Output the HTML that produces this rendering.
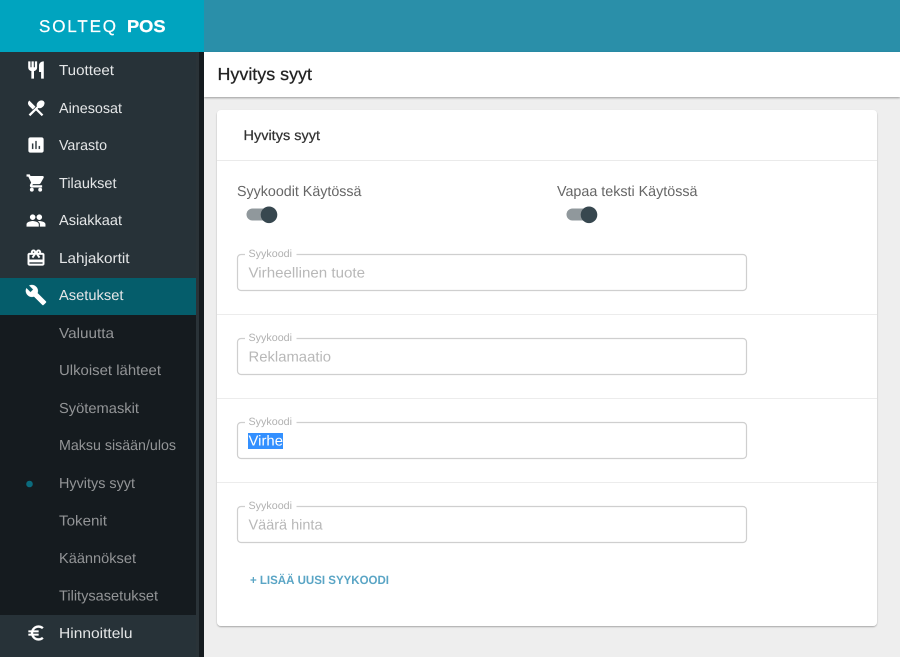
<!DOCTYPE html>
<html><head><meta charset="utf-8"><title>Hyvitys syyt</title>
<style>
html,body{margin:0;padding:0;width:900px;height:657px;overflow:hidden;background:#eee}
svg{display:block;font-family:"Liberation Sans",sans-serif;text-rendering:geometricPrecision}
.n{font-size:14.5px;fill:#e4e6e7}
.s{font-size:14.5px;fill:#939597}
.l{font-size:10.5px;fill:#b0b0b0}
.v{font-size:14.5px;fill:#b8b8b8}
</style></head><body>
<svg width="900" height="657" viewBox="0 0 900 657" xmlns="http://www.w3.org/2000/svg">
<defs>
<filter id="sh" x="-5%" y="-5%" width="110%" height="110%"><feDropShadow dx="0" dy="1" stdDeviation=".7" flood-color="#000" flood-opacity=".3"/></filter>
<filter id="sh2" x="-5%" y="-20%" width="110%" height="150%"><feDropShadow dx="0" dy="1" stdDeviation="1" flood-color="#000" flood-opacity=".35"/></filter>
</defs>
<rect width="900" height="657" fill="#eeeeee"/>
<rect x="204" y="0" width="696" height="52" fill="#2a8fa9"/>
<rect x="204" y="52" width="696" height="45" fill="#fff" filter="url(#sh2)"/>
<rect x="0" y="52" width="196" height="605" fill="#273238"/>
<rect x="196" y="52" width="3" height="605" fill="#2a3338"/>
<rect x="199" y="52" width="5" height="605" fill="#151b1f"/>
<rect x="0" y="0" width="204" height="52" fill="#00a4bf"/>
<rect x="0" y="278" width="196" height="37" fill="#055d6b"/>
<rect x="0" y="315" width="196" height="300" fill="#151b1f"/>
<text x="39" y="32" font-size="17" fill="#fff" stroke="#fff" stroke-width=".25" textLength="77" lengthAdjust="spacing">SOLTEQ</text>
<text x="127" y="32" font-size="17" font-weight="700" fill="#fff" stroke="#fff" stroke-width=".3" textLength="38.500" lengthAdjust="spacingAndGlyphs">POS</text>

<g fill="#fff" stroke="#fff" stroke-width=".7">
<svg x="26" y="60" width="20" height="20" viewBox="0 0 24 24"><path d="M11 9H9V2H7v7H5V2H3v7c0 2.12 1.66 3.84 3.75 3.97V22h2.5v-9.03C11.34 12.84 13 11.12 13 9V2h-2v7zm5-3v8h2.5v8H21V2c-2.76 0-5 2.24-5 4z"/></svg>
<svg x="26" y="98" width="20" height="20" viewBox="0 0 24 24"><path d="M8.1 13.34l2.83-2.83L3.91 3.5c-1.56 1.56-1.56 4.09 0 5.66l4.19 4.18zm6.78-1.81c1.53.71 3.68.21 5.27-1.38 1.91-1.91 2.28-4.65.81-6.12-1.46-1.46-4.2-1.1-6.12.81-1.59 1.59-2.09 3.74-1.38 5.27L3.7 19.87l1.41 1.41L12 14.41l6.88 6.88 1.41-1.41L13.41 13l1.47-1.47z"/></svg>
<svg x="26" y="135" width="20" height="20" viewBox="0 0 24 24"><path stroke-width=".3" d="M19 3H5c-1.1 0-2 .9-2 2v14c0 1.1.9 2 2 2h14c1.1 0 2-.9 2-2V5c0-1.1-.9-2-2-2zM9 17H7v-7h2v7zm4 0h-2V7h2v10zm4 0h-2v-4h2v4z"/></svg>
<svg x="26" y="173" width="20" height="20" viewBox="0 0 24 24"><path d="M7 18c-1.1 0-1.99.9-1.99 2S5.9 22 7 22s2-.9 2-2-.9-2-2-2zM1 2v2h2l3.6 7.59-1.35 2.45c-.16.28-.25.61-.25.96 0 1.1.9 2 2 2h12v-2H7.42c-.14 0-.25-.11-.25-.25l.03-.12.9-1.63h7.45c.75 0 1.41-.41 1.75-1.03l3.58-6.49c.08-.14.12-.31.12-.48 0-.55-.45-1-1-1H5.21l-.94-2H1zm16 16c-1.1 0-1.99.9-1.99 2s.89 2 1.99 2 2-.9 2-2-.9-2-2-2z"/></svg>
<svg x="26" y="210.500" width="20" height="20" viewBox="0 0 24 24"><path d="M16 11c1.66 0 2.99-1.34 2.99-3S17.66 5 16 5c-1.66 0-3 1.34-3 3s1.34 3 3 3zm-8 0c1.66 0 2.99-1.34 2.99-3S9.66 5 8 5C6.34 5 5 6.34 5 8s1.34 3 3 3zm0 2c-2.33 0-7 1.17-7 3.5V19h14v-2.5c0-2.33-4.67-3.5-7-3.500zm8 0c-.29 0-.62.02-.97.05 1.16.84 1.97 1.97 1.97 3.45V19h6v-2.5c0-2.33-4.67-3.5-7-3.5z"/></svg>
<svg x="26" y="248" width="20" height="20" viewBox="0 0 24 24"><path stroke-width=".4" d="M20 6h-2.18c.11-.31.18-.65.18-1 0-1.66-1.34-3-3-3-1.05 0-1.96.54-2.5 1.35l-.5.67-.5-.68C10.96 2.54 10.05 2 9 2 7.34 2 6 3.34 6 5c0 .35.07.69.18 1H4c-1.11 0-1.99.89-1.99 2L2 19c0 1.11.89 2 2 2h16c1.11 0 2-.89 2-2V8c0-1.11-.89-2-2-2zm-5-2c.55 0 1 .45 1 1s-.45 1-1 1-1-.45-1-1 .45-1 1-1zM9 4c.55 0 1 .45 1 1s-.45 1-1 1-1-.45-1-1 .45-1 1-1zm11 15H4v-2h16v2zm0-5H4V8h5.08L7 10.83 8.62 12 11 8.76l1-1.36 1 1.36L15.38 12 17 10.83 14.92 8H20v6z"/></svg>
<svg x="25" y="284" width="22" height="22" viewBox="0 0 24 24"><path stroke-width=".4" d="M22.7 19l-9.1-9.1c.9-2.3.4-5-1.5-6.9-2-2-5-2.4-7.4-1.3L9 6 6 9 1.600 4.700C.4 7.100.9 10.100 2.900 12.100c1.900 1.900 4.600 2.400 6.900 1.500l9.100 9.100c.4.4 1 .4 1.400 0l2.300-2.300c.5-.4.5-1.100.1-1.400z"/></svg>
<svg x="26" y="623" width="20" height="20" viewBox="0 0 24 24"><path stroke-width=".4" d="M15 18.500c-2.510 0-4.680-1.420-5.760-3.500H15v-2H8.580c-.05-.33-.08-.66-.08-1s.03-.67.08-1H15V9H9.240C10.320 6.920 12.500 5.500 15 5.500c1.610 0 3.090.59 4.230 1.570L21 5.300C19.410 3.870 17.300 3 15 3c-3.920 0-7.240 2.510-8.480 6H3v2h3.060c-.04.33-.06.66-.06 1 0 .34.02.67.06 1H3v2h3.520c1.240 3.490 4.560 6 8.480 6 2.310 0 4.410-.87 6-2.300l-1.780-1.770c-1.130.98-2.600 1.570-4.220 1.570z"/></svg>
</g>

<text class="n" x="59" y="75" textLength="55" lengthAdjust="spacingAndGlyphs">Tuotteet</text>
<text class="n" x="59" y="113" textLength="63" lengthAdjust="spacingAndGlyphs">Ainesosat</text>
<text class="n" x="59" y="150" textLength="48" lengthAdjust="spacingAndGlyphs">Varasto</text>
<text class="n" x="59" y="188" textLength="57.500" lengthAdjust="spacingAndGlyphs">Tilaukset</text>
<text class="n" x="59" y="225" textLength="63" lengthAdjust="spacingAndGlyphs">Asiakkaat</text>
<text class="n" x="59" y="263" textLength="70.500" lengthAdjust="spacingAndGlyphs">Lahjakortit</text>
<text class="n" x="59" y="300" textLength="64.500" lengthAdjust="spacingAndGlyphs">Asetukset</text>
<text class="s" x="59" y="338" textLength="55" lengthAdjust="spacingAndGlyphs">Valuutta</text>
<text class="s" x="59" y="375" textLength="102" lengthAdjust="spacingAndGlyphs">Ulkoiset lähteet</text>
<text class="s" x="59" y="413" textLength="80" lengthAdjust="spacingAndGlyphs">Syötemaskit</text>
<text class="s" x="59" y="450" textLength="117" lengthAdjust="spacingAndGlyphs">Maksu sisään/ulos</text>
<circle cx="29.500" cy="484" r="3.300" fill="#0b6b7d"/>
<text class="s" x="59" y="488" textLength="76" lengthAdjust="spacingAndGlyphs">Hyvitys syyt</text>
<text class="s" x="59" y="525.500" textLength="48" lengthAdjust="spacingAndGlyphs">Tokenit</text>
<text class="s" x="59" y="563" textLength="77" lengthAdjust="spacingAndGlyphs">Käännökset</text>
<text class="s" x="59" y="600.500" textLength="99" lengthAdjust="spacingAndGlyphs">Tilitysasetukset</text>
<text class="n" x="59" y="638" textLength="73.500" lengthAdjust="spacingAndGlyphs">Hinnoittelu</text>

<text x="217.500" y="80" font-size="17.500" fill="#222" stroke="#222" stroke-width=".25" textLength="94.500" lengthAdjust="spacingAndGlyphs">Hyvitys syyt</text>

<rect x="217" y="110" width="660" height="516" rx="4" fill="#fff" filter="url(#sh)"/>
<text x="243.500" y="140" font-size="14" fill="#333" stroke="#333" stroke-width=".25" textLength="76.500" lengthAdjust="spacingAndGlyphs">Hyvitys syyt</text>
<rect x="217" y="160" width="660" height="1" fill="#eaeaea"/>

<text x="237" y="196" font-size="14.500" fill="#666" textLength="124.500" lengthAdjust="spacingAndGlyphs">Syykoodit Käytössä</text>
<text x="557" y="196" font-size="14.500" fill="#666" textLength="140.500" lengthAdjust="spacingAndGlyphs">Vapaa teksti Käytössä</text>

<rect x="246.500" y="208.500" width="24" height="12" rx="6" fill="#90989c"/>
<circle cx="269" cy="214.800" r="8.300" fill="#37474f"/>
<rect x="566.500" y="208.500" width="24" height="12" rx="6" fill="#90989c"/>
<circle cx="589" cy="214.800" r="8.300" fill="#37474f"/>

<g fill="none" stroke="#cfcfcf" stroke-width="1.200">
<path d="M245 254.500H241a3.500 3.500 0 0 0-3.500 3.500V287a3.500 3.500 0 0 0 3.500 3.500H743a3.500 3.500 0 0 0 3.500-3.500V258a3.500 3.500 0 0 0-3.500-3.500H296.500"/>
<path d="M245 338.500H241a3.500 3.500 0 0 0-3.500 3.500V371a3.500 3.500 0 0 0 3.500 3.500H743a3.500 3.500 0 0 0 3.500-3.500V342a3.500 3.500 0 0 0-3.500-3.500H296.500"/>
<path d="M245 422.500H241a3.500 3.500 0 0 0-3.500 3.500V455a3.500 3.500 0 0 0 3.500 3.500H743a3.500 3.500 0 0 0 3.500-3.500V426a3.500 3.500 0 0 0-3.500-3.500H296.500"/>
<path d="M245 506.500H241a3.500 3.500 0 0 0-3.500 3.500V539a3.500 3.500 0 0 0 3.500 3.500H743a3.500 3.500 0 0 0 3.500-3.500V510a3.500 3.500 0 0 0-3.500-3.500H296.500"/>
</g>
<text class="l" x="248.500" y="257" textLength="43.500" lengthAdjust="spacingAndGlyphs">Syykoodi</text>
<text class="l" x="248.500" y="341" textLength="43.500" lengthAdjust="spacingAndGlyphs">Syykoodi</text>
<text class="l" x="248.500" y="425" textLength="43.500" lengthAdjust="spacingAndGlyphs">Syykoodi</text>
<text class="l" x="248.500" y="509" textLength="43.500" lengthAdjust="spacingAndGlyphs">Syykoodi</text>
<text class="v" x="248.500" y="277.500" textLength="116.500" lengthAdjust="spacingAndGlyphs">Virheellinen tuote</text>
<text class="v" x="248.500" y="361.500" textLength="82.500" lengthAdjust="spacingAndGlyphs">Reklamaatio</text>
<rect x="248" y="433" width="35" height="16" fill="#3390ff"/>
<text x="248.500" y="445.500" font-size="14.500" fill="#fff" textLength="34.500" lengthAdjust="spacingAndGlyphs">Virhe</text>
<text class="v" x="248.500" y="529.500" textLength="74" lengthAdjust="spacingAndGlyphs">Väärä hinta</text>

<rect x="217" y="314" width="660" height="1" fill="#ececec"/>
<rect x="217" y="398" width="660" height="1" fill="#ececec"/>
<rect x="217" y="482" width="660" height="1" fill="#ececec"/>

<text x="250" y="584" font-size="12" font-weight="700" fill="#5aa5c5" textLength="139" lengthAdjust="spacingAndGlyphs">+ LISÄÄ UUSI SYYKOODI</text>
</svg>
</body></html>
